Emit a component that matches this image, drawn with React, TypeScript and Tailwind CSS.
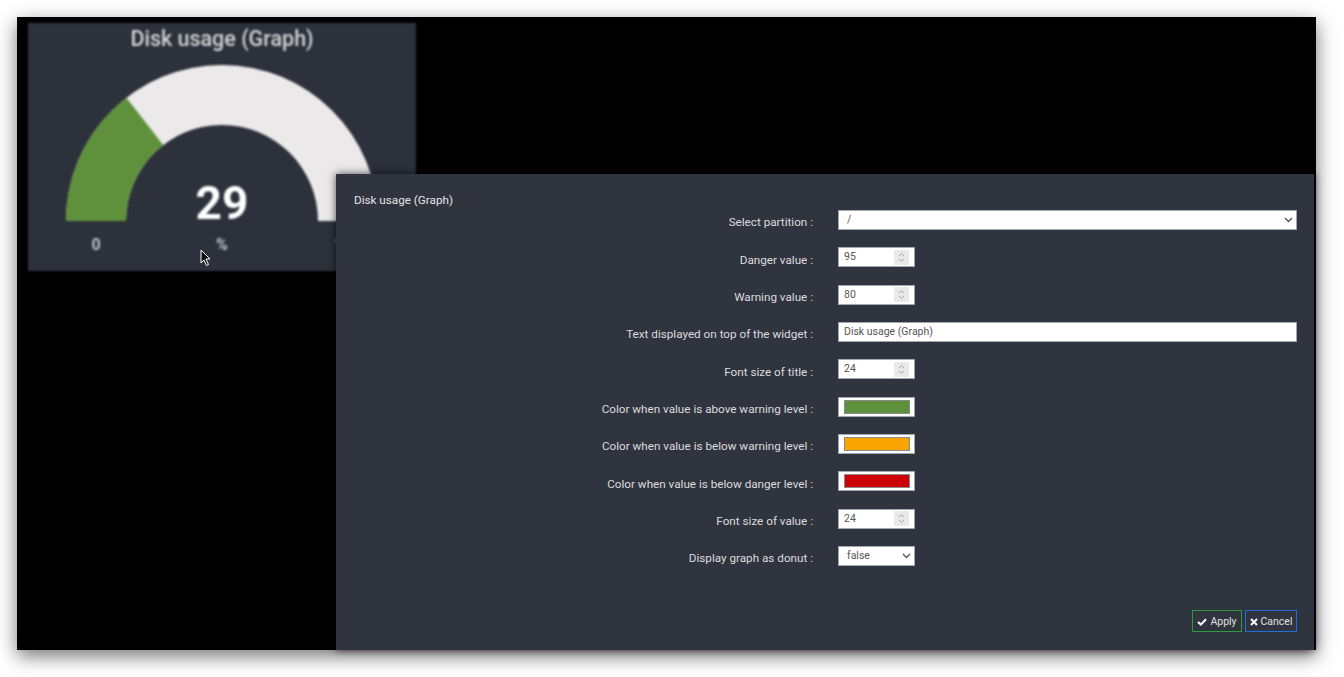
import React from "react";

const font = { fontFamily: "Roboto, 'Noto Sans', sans-serif" };

function Spinner() {
  return (
    <div className="flex h-[15px] w-[15px] flex-col items-center justify-center bg-[#e9e9ea]">
      <svg width="7" height="11" viewBox="0 0 7 11" fill="none" stroke="#a3a3a3" strokeWidth="1">
        <path d="M1 4 L3.5 1.5 L6 4" />
        <path d="M1 7 L3.5 9.5 L6 7" />
      </svg>
    </div>
  );
}

function NumberInput({ value }: { value: string }) {
  return (
    <div className="flex h-[20px] w-[77px] items-center justify-between border border-[#a0a7b0] bg-white pl-[5px] pr-[5px]">
      <span className="text-[10.5px] text-[#555]">{value}</span>
      <Spinner />
    </div>
  );
}

function Chevron() {
  return (
    <svg width="9" height="6" viewBox="0 0 9 6" fill="none" stroke="#555" strokeWidth="1.4">
      <path d="M1 1 L4.5 4.5 L8 1" />
    </svg>
  );
}

function SelectBox({ value, full }: { value: string; full?: boolean }) {
  return (
    <div
      className={`flex h-[20px] items-center justify-between border border-[#a0a7b0] bg-white pl-[8px] pr-[3px] ${
        full ? "w-full" : "w-[77px]"
      }`}
    >
      <span className="text-[10.5px] text-[#555]">{value}</span>
      <Chevron />
    </div>
  );
}

function TextInput({ value }: { value: string }) {
  return (
    <div className="flex h-[20px] w-full items-center border border-[#a0a7b0] bg-white pl-[5px]">
      <span className="text-[10.5px] text-[#555]">{value}</span>
    </div>
  );
}

function ColorInput({ color }: { color: string }) {
  return (
    <div className="flex h-[20px] w-[77px] items-center border border-[#a0a7b0] bg-white pl-[5px] pr-[4px]">
      <div className="h-[14px] w-full border border-[#8a8a8a]" style={{ backgroundColor: color }} />
    </div>
  );
}

const rows: { label: string; field: React.ReactNode }[] = [
  { label: "Select partition :", field: <SelectBox value="/" full /> },
  { label: "Danger value :", field: <NumberInput value="95" /> },
  { label: "Warning value :", field: <NumberInput value="80" /> },
  { label: "Text displayed on top of the widget :", field: <TextInput value="Disk usage (Graph)" /> },
  { label: "Font size of title :", field: <NumberInput value="24" /> },
  { label: "Color when value is above warning level :", field: <ColorInput color="#5f913c" /> },
  { label: "Color when value is below warning level :", field: <ColorInput color="#f9a602" /> },
  { label: "Color when value is below danger level :", field: <ColorInput color="#cc0006" /> },
  { label: "Font size of value :", field: <NumberInput value="24" /> },
  { label: "Display graph as donut :", field: <SelectBox value="false" /> },
];

function Gauge() {
  return (
    <svg width="388" height="220" viewBox="0 0 388 220">
      <path d="M 38 170 A 156 156 0 0 1 350 170 L 290 170 A 96 96 0 0 0 98 170 Z" fill="#ebe9ea" />
      <path d="M 38 170 A 156 156 0 0 1 98.4 46.7 L 135.2 94.1 A 96 96 0 0 0 98 170 Z" fill="#5f913c" />
      <text x="194" y="168" textAnchor="middle" fontSize="46" fontWeight="700" fill="#ffffff" style={font}>
        29
      </text>
      <text x="68" y="199" textAnchor="middle" fontSize="16" fontWeight="700" fill="#bfc2c7" style={font}>
        0
      </text>
      <text x="194" y="199" textAnchor="middle" fontSize="16" fontWeight="700" fill="#bfc2c7" style={font}>
        %
      </text>
      <text x="320" y="199" textAnchor="middle" fontSize="16" fontWeight="700" fill="#bfc2c7" style={font}>
        100
      </text>
    </svg>
  );
}

export default function App() {
  return (
    <div className="h-[677px] w-[1344px] bg-white pl-[17px] pt-[17px]" style={font}>
      <div className="relative h-[633px] w-[1299px] bg-black shadow-[0_6px_18px_rgba(0,0,0,0.55)]">
        <div className="pl-[11px] pt-[6px]">
          <div className="flex h-[248px] w-[388px] flex-col items-center bg-[#2d313b] blur-[1px]">
            <div className="mt-[4px] h-[24px] text-[21.5px] font-medium leading-[24px] text-[#d4d4d6]">
              Disk usage (Graph)
            </div>
            <Gauge />
          </div>
        </div>

        {/* mouse cursor */}
        <svg className="absolute left-[183px] top-[232px]" width="12" height="18" viewBox="0 0 12 18">
          <path d="M1 1 L1 14 L4 11 L6.5 16.5 L8.5 15.5 L6 10 L10 10 Z" fill="#111" stroke="#fff" strokeWidth="1" />
        </svg>

        {/* dialog */}
        <div className="absolute bottom-0 left-[319px] right-[2px] top-[157px] flex flex-col bg-[#30343f] pb-[18px] pl-[18px] pr-[17px] pt-[18px] shadow-[0_0_8px_rgba(0,0,0,0.7)]">
          <div className="text-[11.7px] leading-[16px] text-[#e4e4e6]">Disk usage (Graph)</div>
          <div className="mt-[2px] grid grid-cols-2 gap-x-[25px] gap-y-[17.33px]">
            {rows.map((r) => (
              <React.Fragment key={r.label}>
                <div className="flex h-[20px] items-center justify-end pt-[6px] text-[11.7px] text-[#dcdcde]">
                  {r.label}
                </div>
                <div className="flex h-[20px] items-center">{r.field}</div>
              </React.Fragment>
            ))}
          </div>
          <div className="mt-auto flex justify-end gap-[3px]">
            <div className="flex h-[22px] w-[50px] items-center justify-center gap-[3px] border border-[#2e9a3e] pt-[1px] text-[10.5px] text-[#e0e0e2]">
              <svg width="10" height="8" viewBox="0 0 10 8">
                <path d="M1 4 L3.8 6.6 L9 1.2" fill="none" stroke="#ffffff" strokeWidth="2" />
              </svg>
              Apply
            </div>
            <div className="flex h-[22px] w-[52px] items-center justify-center gap-[3px] border border-[#1f6fd6] pt-[1px] text-[10.5px] text-[#e0e0e2]">
              <svg width="8" height="8" viewBox="0 0 8 8">
                <path d="M1 1 L7 7 M7 1 L1 7" fill="none" stroke="#ffffff" strokeWidth="2" />
              </svg>
              Cancel
            </div>
          </div>
        </div>
      </div>
    </div>
  );
}
